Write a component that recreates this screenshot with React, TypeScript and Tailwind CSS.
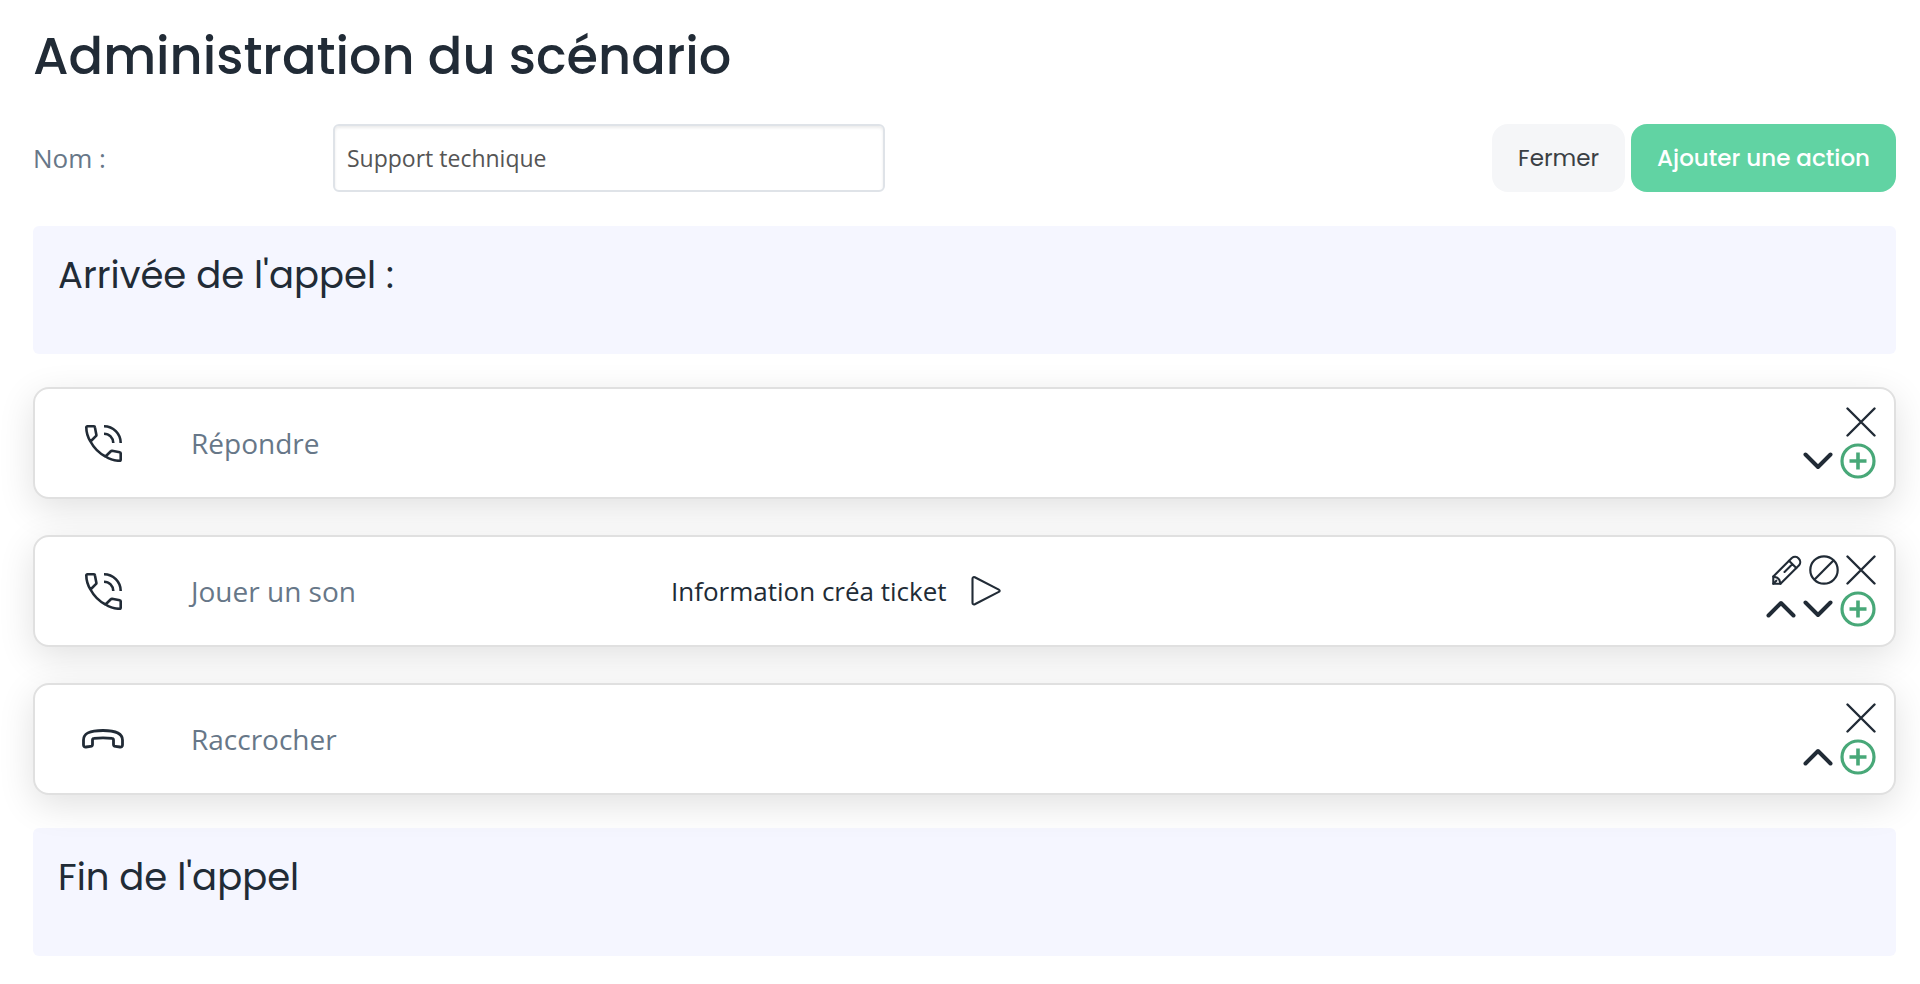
import React, { useState } from 'react';

type IconProps = { className?: string };

type Action = {
  id: string;
  label: string;
  icon: 'call' | 'hangup';
  sound?: string;
  editable?: boolean;
  up?: boolean;
  down?: boolean;
};

const actions: Action[] = [
  { id: 'answer', label: 'Répondre', icon: 'call', down: true },
  { id: 'play', label: 'Jouer un son', icon: 'call', sound: 'Information créa ticket', editable: true, up: true, down: true },
  { id: 'hangup', label: 'Raccrocher', icon: 'hangup', up: true },
];

function CallIcon() {
  return (
    <svg width="37" height="37" viewBox="0 0 37 37" fill="none" stroke="currentColor" strokeWidth="2.6" strokeLinejoin="round">
      <path d="M5.5 16.5C2.6 12 1.3 7 1.3 2.3a1 1 0 0 1 1-1h6.6a1 1 0 0 1 1 .9l1.5 7.8a1 1 0 0 1-.3.9L5.5 16.5C8.8 22.8 14.2 28.2 20.5 31.5L26.1 26a1 1 0 0 1 .9-.3l7.8 1.5a1 1 0 0 1 .9 1v6.6a1 1 0 0 1-1 1C30 35.7 25 34.4 20.5 31.5" />
      <path d="M19 1.3A16.7 16.7 0 0 1 35.7 18M19 8.7A9.3 9.3 0 0 1 28.3 18" />
    </svg>
  );
}

function HangupIcon() {
  return (
    <svg width="42" height="20" viewBox="0 0 42 20" fill="none" stroke="currentColor" strokeWidth="2.8" strokeLinejoin="round">
      <path d="M1.5 11C1.5 4.5 7 1.5 21 1.5S40.5 4.5 40.5 11v5c0 1.5-1 2.2-2.500 2l-4.500-.6c-1.300-.2-2-.9-2-2V11c0-1-.5-1.500-1.500-1.600-6-.8-12-.8-18 0-1 .1-1.500.6-1.500 1.600v4.400c0 1.100-.7 1.800-2 2L4 18c-1.500.2-2.500-.5-2.500-2z" />
    </svg>
  );
}

function PlayIcon() {
  return (
    <svg width="30" height="30" viewBox="0 0 30 30" fill="none" stroke="currentColor" strokeWidth="2.1" strokeLinejoin="round">
      <path d="M1.5 2.8c0-1.5 1-2.1 2.3-1.5l24 12.3c1.2.6 1.2 1.7 0 2.3l-24 12.3c-1.3.6-2.3 0-2.3-1.5z" />
    </svg>
  );
}

function PencilIcon() {
  return (
    <svg width="30" height="30" viewBox="0 0 30 30" fill="none" stroke="currentColor" strokeWidth="2.1" strokeLinejoin="round" strokeLinecap="round">
      <path d="M1.3 28.7V21.5L19.8 3a5.2 5.2 0 0 1 7.3 7.3L8.5 28.7z" />
      <path d="M1.3 21.5l4 1.2 2 2 1.2 4M1.3 28.7l3-3M17 5.8l7.3 7.3M20 9.5L12.5 17" />
    </svg>
  );
}

function DisableIcon() {
  return (
    <svg width="30" height="30" viewBox="0 0 30 30" fill="none" stroke="currentColor" strokeWidth="2.2">
      <circle cx="15" cy="15" r="13.7" />
      <path d="M5.3 24.7L24.7 5.3" />
    </svg>
  );
}

function CloseIcon() {
  return (
    <svg width="30" height="30" viewBox="0 0 30 30" fill="none" stroke="currentColor" strokeWidth="2.4" strokeLinecap="round">
      <path d="M1.5 1.5l27 27M28.5 1.5l-27 27" />
    </svg>
  );
}

function ChevronIcon({ className }: IconProps) {
  return (
    <svg className={className} width="30" height="30" viewBox="0 0 30 30" fill="none" stroke="currentColor" strokeWidth="4" strokeLinecap="round" strokeLinejoin="round">
      <path d="M2.5 8.5L15 21L27.5 8.5" />
    </svg>
  );
}

function AddIcon() {
  return (
    <svg width="36" height="36" viewBox="0 0 36 36" fill="none" stroke="currentColor">
      <circle cx="18" cy="18" r="16" strokeWidth="3.2" />
      <path d="M18 9.5v17M9.5 18h17" strokeWidth="3.6" />
    </svg>
  );
}

function SectionTitle({ title }: { title: string }) {
  return (
    <section className="h-32 rounded-md bg-[#f5f6ff] px-[25px] pt-6">
      <h2 className="font-[Poppins,Inter,sans-serif] text-[37px] leading-[50px]">{title}</h2>
    </section>
  );
}

function ActionCard({ action }: { action: Action }) {
  return (
    <li className="relative flex items-center rounded-2xl border-2 border-[#e0e0e0] bg-white py-[18px] pr-[18px] pl-[46px] shadow-[0_10px_36px_rgba(0,0,0,0.12)]">
      <div className="mr-[66px] flex w-11 shrink-0 justify-center">
        {action.icon === 'call' ? <CallIcon /> : <HangupIcon />}
      </div>
      <div className="w-120 text-[28px] leading-10 text-[#677788]">{action.label}</div>
      {action.sound && (
        <div className="flex items-center gap-6 text-[26px] leading-10">
          <span>{action.sound}</span>
          <button type="button" aria-label="Écouter">
            <PlayIcon />
          </button>
        </div>
      )}
      <div className="ml-auto flex flex-col items-end gap-1.5">
        <div className="flex items-center gap-[7px]">
          {action.editable && (
            <>
              <button type="button" aria-label="Modifier">
                <PencilIcon />
              </button>
              <button type="button" aria-label="Désactiver">
                <DisableIcon />
              </button>
            </>
          )}
          <button type="button" aria-label="Supprimer">
            <CloseIcon />
          </button>
        </div>
        <div className="flex items-center gap-[7px]">
          {action.up && (
            <button type="button" aria-label="Monter">
              <ChevronIcon className="rotate-180" />
            </button>
          )}
          {action.down && (
            <button type="button" aria-label="Descendre">
              <ChevronIcon />
            </button>
          )}
          <button type="button" aria-label="Ajouter" className="text-[#48a878]">
            <AddIcon />
          </button>
        </div>
      </div>
    </li>
  );
}

export default function App() {
  const [name, setName] = useState('Support technique');

  return (
    <main className="min-h-screen bg-white pt-6 pr-6 pb-7 pl-[33px] font-['Open_Sans','Noto_Sans',sans-serif] text-[#212b36] [&_svg]:block">
      <h1 className="font-[Poppins,Inter,sans-serif] text-[51px] leading-16 font-medium">Administration du scénario</h1>

      <div className="mt-9 flex items-center">
        <label htmlFor="scenario-name" className="w-75 text-[26px] text-[#677788]">
          Nom :
        </label>
        <input
          id="scenario-name"
          type="text"
          value={name}
          onChange={(e) => setName(e.target.value)}
          className="h-17 w-138 rounded-md border-2 border-[#dfe3e8] px-3 text-[23px] text-[#555555] shadow-[inset_0_2px_3px_rgba(0,0,0,0.08)] outline-none"
        />
        <div className="ml-auto flex gap-1.5 font-[Poppins,Inter,sans-serif] text-[23px]">
          <button type="button" className="h-17 rounded-2xl bg-[#f5f6f8] px-[26px] text-[#3a3f44]">
            Fermer
          </button>
          <button type="button" className="h-17 rounded-2xl bg-[#61d3a3] px-[26px] font-medium text-white">
            Ajouter une action
          </button>
        </div>
      </div>

      <div className="mt-[34px]">
        <SectionTitle title="Arrivée de l'appel :" />
      </div>

      <ul className="my-[33px] space-y-9">
        {actions.map((action) => (
          <ActionCard key={action.id} action={action} />
        ))}
      </ul>

      <SectionTitle title="Fin de l'appel" />
    </main>
  );
}
